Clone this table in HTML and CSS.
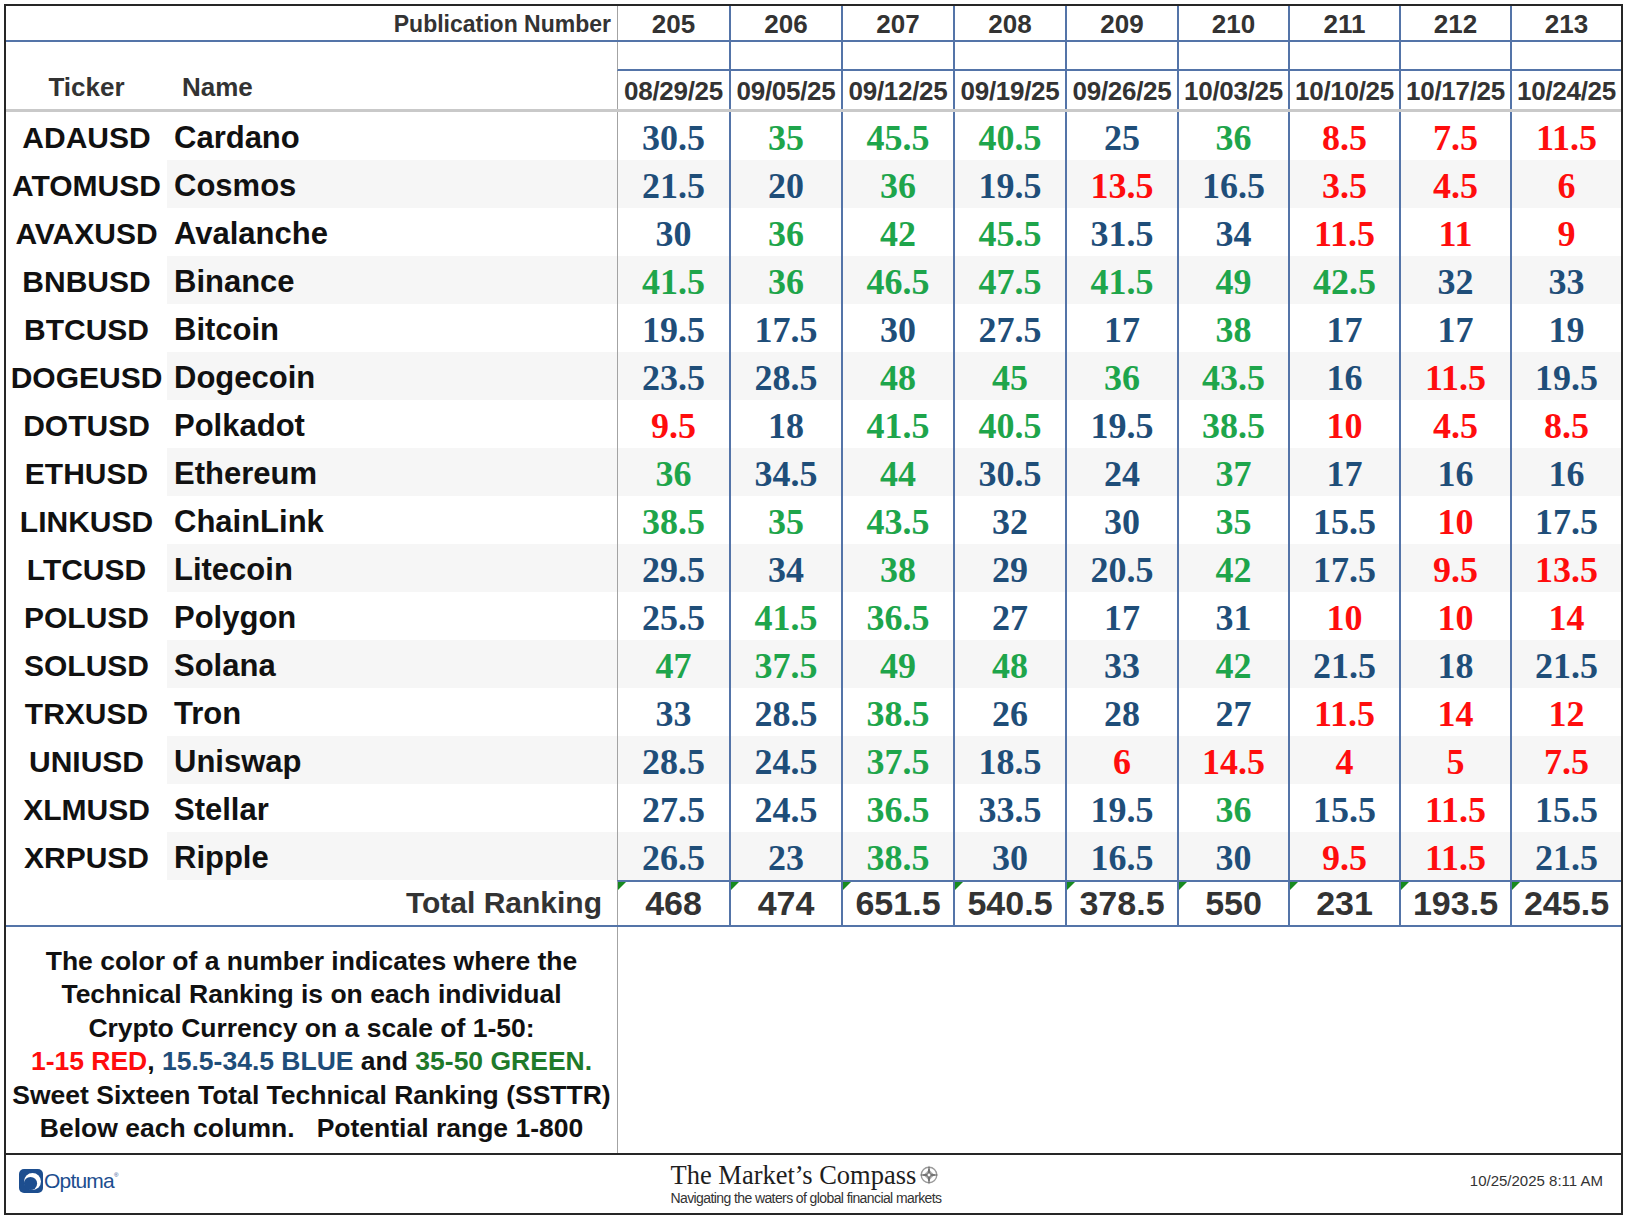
FILE: index.html
```html
<!DOCTYPE html>
<html>
<head>
<meta charset="utf-8">
<title>Sweet Sixteen Technical Rankings</title>
<link rel="stylesheet" href="styles.css">
</head>
<body>
<div class="frame">
  <div class="row hdr1">
    <div class="c pub">Publication Number</div>
    <div class="c n first hnum">205</div>
    <div class="c n hnum">206</div>
    <div class="c n hnum">207</div>
    <div class="c n hnum">208</div>
    <div class="c n hnum">209</div>
    <div class="c n hnum">210</div>
    <div class="c n hnum">211</div>
    <div class="c n hnum">212</div>
    <div class="c n hnum">213</div>
  </div>
  <div class="row hdr2">
    <div class="c hticker">Ticker</div>
    <div class="c hname">Name</div>
    <div class="c n first blank"></div>
    <div class="c n blank"></div>
    <div class="c n blank"></div>
    <div class="c n blank"></div>
    <div class="c n blank"></div>
    <div class="c n blank"></div>
    <div class="c n blank"></div>
    <div class="c n blank"></div>
    <div class="c n blank"></div>
    <div class="c n first date">08/29/25</div>
    <div class="c n date">09/05/25</div>
    <div class="c n date">09/12/25</div>
    <div class="c n date">09/19/25</div>
    <div class="c n date">09/26/25</div>
    <div class="c n date">10/03/25</div>
    <div class="c n date">10/10/25</div>
    <div class="c n date">10/17/25</div>
    <div class="c n date">10/24/25</div>
  </div>

  <div class="row data">
    <div class="c tk">ADAUSD</div><div class="c nm">Cardano</div>
    <div class="c n first v b">30.5</div><div class="c n v g">35</div><div class="c n v g">45.5</div><div class="c n v g">40.5</div><div class="c n v b">25</div><div class="c n v g">36</div><div class="c n v r">8.5</div><div class="c n v r">7.5</div><div class="c n v r">11.5</div>
  </div>
  <div class="row data alt">
    <div class="c tk">ATOMUSD</div><div class="c nm">Cosmos</div>
    <div class="c n first v b">21.5</div><div class="c n v b">20</div><div class="c n v g">36</div><div class="c n v b">19.5</div><div class="c n v r">13.5</div><div class="c n v b">16.5</div><div class="c n v r">3.5</div><div class="c n v r">4.5</div><div class="c n v r">6</div>
  </div>
  <div class="row data">
    <div class="c tk">AVAXUSD</div><div class="c nm">Avalanche</div>
    <div class="c n first v b">30</div><div class="c n v g">36</div><div class="c n v g">42</div><div class="c n v g">45.5</div><div class="c n v b">31.5</div><div class="c n v b">34</div><div class="c n v r">11.5</div><div class="c n v r">11</div><div class="c n v r">9</div>
  </div>
  <div class="row data alt">
    <div class="c tk">BNBUSD</div><div class="c nm">Binance</div>
    <div class="c n first v g">41.5</div><div class="c n v g">36</div><div class="c n v g">46.5</div><div class="c n v g">47.5</div><div class="c n v g">41.5</div><div class="c n v g">49</div><div class="c n v g">42.5</div><div class="c n v b">32</div><div class="c n v b">33</div>
  </div>
  <div class="row data">
    <div class="c tk">BTCUSD</div><div class="c nm">Bitcoin</div>
    <div class="c n first v b">19.5</div><div class="c n v b">17.5</div><div class="c n v b">30</div><div class="c n v b">27.5</div><div class="c n v b">17</div><div class="c n v g">38</div><div class="c n v b">17</div><div class="c n v b">17</div><div class="c n v b">19</div>
  </div>
  <div class="row data alt">
    <div class="c tk">DOGEUSD</div><div class="c nm">Dogecoin</div>
    <div class="c n first v b">23.5</div><div class="c n v b">28.5</div><div class="c n v g">48</div><div class="c n v g">45</div><div class="c n v g">36</div><div class="c n v g">43.5</div><div class="c n v b">16</div><div class="c n v r">11.5</div><div class="c n v b">19.5</div>
  </div>
  <div class="row data">
    <div class="c tk">DOTUSD</div><div class="c nm">Polkadot</div>
    <div class="c n first v r">9.5</div><div class="c n v b">18</div><div class="c n v g">41.5</div><div class="c n v g">40.5</div><div class="c n v b">19.5</div><div class="c n v g">38.5</div><div class="c n v r">10</div><div class="c n v r">4.5</div><div class="c n v r">8.5</div>
  </div>
  <div class="row data alt">
    <div class="c tk">ETHUSD</div><div class="c nm">Ethereum</div>
    <div class="c n first v g">36</div><div class="c n v b">34.5</div><div class="c n v g">44</div><div class="c n v b">30.5</div><div class="c n v b">24</div><div class="c n v g">37</div><div class="c n v b">17</div><div class="c n v b">16</div><div class="c n v b">16</div>
  </div>
  <div class="row data">
    <div class="c tk">LINKUSD</div><div class="c nm">ChainLink</div>
    <div class="c n first v g">38.5</div><div class="c n v g">35</div><div class="c n v g">43.5</div><div class="c n v b">32</div><div class="c n v b">30</div><div class="c n v g">35</div><div class="c n v b">15.5</div><div class="c n v r">10</div><div class="c n v b">17.5</div>
  </div>
  <div class="row data alt">
    <div class="c tk">LTCUSD</div><div class="c nm">Litecoin</div>
    <div class="c n first v b">29.5</div><div class="c n v b">34</div><div class="c n v g">38</div><div class="c n v b">29</div><div class="c n v b">20.5</div><div class="c n v g">42</div><div class="c n v b">17.5</div><div class="c n v r">9.5</div><div class="c n v r">13.5</div>
  </div>
  <div class="row data">
    <div class="c tk">POLUSD</div><div class="c nm">Polygon</div>
    <div class="c n first v b">25.5</div><div class="c n v g">41.5</div><div class="c n v g">36.5</div><div class="c n v b">27</div><div class="c n v b">17</div><div class="c n v b">31</div><div class="c n v r">10</div><div class="c n v r">10</div><div class="c n v r">14</div>
  </div>
  <div class="row data alt">
    <div class="c tk">SOLUSD</div><div class="c nm">Solana</div>
    <div class="c n first v g">47</div><div class="c n v g">37.5</div><div class="c n v g">49</div><div class="c n v g">48</div><div class="c n v b">33</div><div class="c n v g">42</div><div class="c n v b">21.5</div><div class="c n v b">18</div><div class="c n v b">21.5</div>
  </div>
  <div class="row data">
    <div class="c tk">TRXUSD</div><div class="c nm">Tron</div>
    <div class="c n first v b">33</div><div class="c n v b">28.5</div><div class="c n v g">38.5</div><div class="c n v b">26</div><div class="c n v b">28</div><div class="c n v b">27</div><div class="c n v r">11.5</div><div class="c n v r">14</div><div class="c n v r">12</div>
  </div>
  <div class="row data alt">
    <div class="c tk">UNIUSD</div><div class="c nm">Uniswap</div>
    <div class="c n first v b">28.5</div><div class="c n v b">24.5</div><div class="c n v g">37.5</div><div class="c n v b">18.5</div><div class="c n v r">6</div><div class="c n v r">14.5</div><div class="c n v r">4</div><div class="c n v r">5</div><div class="c n v r">7.5</div>
  </div>
  <div class="row data">
    <div class="c tk">XLMUSD</div><div class="c nm">Stellar</div>
    <div class="c n first v b">27.5</div><div class="c n v b">24.5</div><div class="c n v g">36.5</div><div class="c n v b">33.5</div><div class="c n v b">19.5</div><div class="c n v g">36</div><div class="c n v b">15.5</div><div class="c n v r">11.5</div><div class="c n v b">15.5</div>
  </div>
  <div class="row data alt">
    <div class="c tk">XRPUSD</div><div class="c nm">Ripple</div>
    <div class="c n first v b">26.5</div><div class="c n v b">23</div><div class="c n v g">38.5</div><div class="c n v b">30</div><div class="c n v b">16.5</div><div class="c n v b">30</div><div class="c n v r">9.5</div><div class="c n v r">11.5</div><div class="c n v b">21.5</div>
  </div>

  <div class="row tot">
    <div class="c tlabel">Total Ranking</div>
    <div class="c n first tn">468</div>
    <div class="c n tn">474</div>
    <div class="c n tn">651.5</div>
    <div class="c n tn">540.5</div>
    <div class="c n tn">378.5</div>
    <div class="c n tn">550</div>
    <div class="c n tn">231</div>
    <div class="c n tn">193.5</div>
    <div class="c n tn">245.5</div>
  </div>

  <div class="legend">
    <div class="ltext">
      The color of a number indicates where the<br>
      Technical Ranking is on each individual<br>
      Crypto Currency on a scale of 1-50:<br>
      <span class="lr">1-15 RED</span>, <span class="lb">15.5-34.5 BLUE</span> and <span class="lg">35-50 GREEN.</span><br>
      Sweet Sixteen Total Technical Ranking (SSTTR)<br>
      Below each column.&nbsp;&nbsp; Potential range 1-800
    </div>
    <div class="lright"></div>
  </div>

  <div class="footer">
    <div class="optuma">
      <svg class="ologo" width="24" height="24" viewBox="0 0 24 24">
        <rect x="0" y="0" width="24" height="24" rx="5" fill="#1d4e8f"/>
        <circle cx="13.5" cy="12.5" r="8.5" fill="#ffffff"/>
        <circle cx="11.5" cy="14.5" r="6.6" fill="#1d4e8f"/>
      </svg>
      <span class="otext">Optuma</span><span class="oreg">®</span>
    </div>
    <div class="compass">
      <div class="ctitle">The Market’s Compass
        <svg class="rose" width="20" height="20" viewBox="0 0 18 18">
          <circle cx="9" cy="9" r="7" fill="none" stroke="#9a9a9a" stroke-width="1.2"/>
          <polygon points="9,0.5 10.4,7.6 17.5,9 10.4,10.4 9,17.5 7.6,10.4 0.5,9 7.6,7.6" fill="#555555"/>
          <polygon points="9,4 11.5,6.5 14,9 11.5,11.5 9,14 6.5,11.5 4,9 6.5,6.5" fill="#888888" opacity="0.6"/>
          <circle cx="9" cy="9" r="1.3" fill="#ffffff"/>
        </svg>
      </div>
      <div class="ctag">Navigating the waters of global financial markets</div>
    </div>
    <div class="stamp">10/25/2025 8:11 AM</div>
  </div>
</div>
</body>
</html>
```
FILE: styles.css
```css
* {
  box-sizing: border-box;
  margin: 0;
  padding: 0;
}

body {
  background: #ffffff;
  font-family: "Liberation Sans", Arial, sans-serif;
  margin: 0;
}

.frame {
  margin: 4px;
  width: 1619px;
  height: 1211px;
  border: 2px solid #262626;
  display: flex;
  flex-direction: column;
}

.row {
  display: grid;
  grid-template-columns: 161px 450px 112px 112px 112px 112px 112px 111px 111px 111px 111px;
  flex: none;
}

.c {
  display: flex;
  align-items: center;
  justify-content: center;
  white-space: nowrap;
}

.n {
  border-left: 2px solid #5474a8;
}

.n.first {
  border-left: 1px solid #a3a3a3;
}

/* header row 1 */
.hdr1 {
  height: 36px;
  border-bottom: 2px solid #5474a8;
}

.hdr1 .c {
  padding-top: 3px;
}

.pub {
  grid-column: 1 / 3;
  justify-content: flex-end;
  padding-right: 6px;
  font-size: 23px;
  font-weight: bold;
  color: #333333;
}

.hnum {
  font-size: 26px;
  font-weight: bold;
  color: #333333;
}

/* header rows 2-3 */
.hdr2 {
  height: 70px;
  grid-template-rows: 29px 38px;
  border-bottom: 3px solid #c9c9c9;
}

.hticker {
  grid-row: 1 / 3;
  grid-column: 1;
  align-items: flex-end;
  padding-bottom: 6px;
  font-size: 26px;
  font-weight: bold;
  color: #333333;
}

.hname {
  grid-row: 1 / 3;
  grid-column: 2;
  align-items: flex-end;
  justify-content: flex-start;
  padding-left: 15px;
  padding-bottom: 6px;
  font-size: 26px;
  font-weight: bold;
  color: #333333;
}

.blank {
  border-bottom: 2px solid #5474a8;
}

.date {
  font-size: 26px;
  font-weight: bold;
  color: #333333;
  letter-spacing: -0.3px;
  padding-top: 2px;
}

/* data rows */
.data {
  height: 48px;
}

.data .c {
  padding-top: 3px;
}

.alt .nm,
.alt .n {
  background: #f6f6f6;
}

.tk {
  font-size: 30px;
  font-weight: bold;
  color: #111111;
}

.nm {
  justify-content: flex-start;
  padding-left: 7px;
  font-size: 31px;
  font-weight: bold;
  color: #111111;
}

.v {
  font-family: "Liberation Serif", "Times New Roman", serif;
  font-weight: bold;
  font-size: 36px;
}

.r { color: #ff0d0d; }
.b { color: #1f4e79; }
.g { color: #1ea54b; }

/* total row */
.tot {
  height: 47px;
  border-bottom: 2px solid #5474a8;
}

.tlabel {
  grid-column: 1 / 3;
  justify-content: flex-end;
  padding-right: 15px;
  font-size: 30px;
  font-weight: bold;
  color: #333333;
}

.tn {
  position: relative;
  border-top: 2px solid #5474a8;
  font-size: 34px;
  font-weight: bold;
  color: #333333;
}

.tn::before {
  content: "";
  position: absolute;
  left: 0;
  top: 0;
  border-top: 8px solid #178a1e;
  border-right: 8px solid transparent;
}

/* legend */
.legend {
  display: grid;
  grid-template-columns: 611px 1fr;
  height: 226px;
  flex: none;
}

.ltext {
  padding-top: 18px;
  text-align: center;
  font-size: 26.5px;
  font-weight: bold;
  line-height: 33.4px;
  color: #111111;
  white-space: nowrap;
}

.lr { color: #ff0d0d; }
.lb { color: #1f4e79; }
.lg { color: #1f7a2a; }

.lright {
  border-left: 1px solid #a3a3a3;
}

/* footer */
.footer {
  border-top: 2px solid #262626;
  height: 60px;
  flex: none;
  display: grid;
  grid-template-columns: 1fr auto 1fr;
  align-items: center;
  padding: 0 18px 0 13px;
}

.optuma {
  display: flex;
  align-items: center;
  justify-self: start;
  margin-top: -6px;
}

.ologo {
  display: block;
}

.otext {
  font-size: 21px;
  color: #1d4e8f;
  letter-spacing: -0.8px;
  margin-left: 1px;
}

.oreg {
  font-size: 6px;
  color: #1d4e8f;
  align-self: flex-start;
  margin-top: 3px;
}

.compass {
  display: flex;
  flex-direction: column;
  align-items: flex-start;
  margin-left: -10px;
}

.ctitle {
  display: flex;
  align-items: center;
  font-family: "Liberation Serif", "Times New Roman", serif;
  font-size: 26.5px;
  line-height: 26px;
  color: #1e1e1e;
}

.rose {
  margin-left: 3px;
}

.ctag {
  font-size: 14px;
  line-height: 16px;
  color: #333333;
  letter-spacing: -0.6px;
  margin-top: 2px;
}

.stamp {
  justify-self: end;
  font-size: 15px;
  color: #333333;
  margin-top: -8px;
}
```
